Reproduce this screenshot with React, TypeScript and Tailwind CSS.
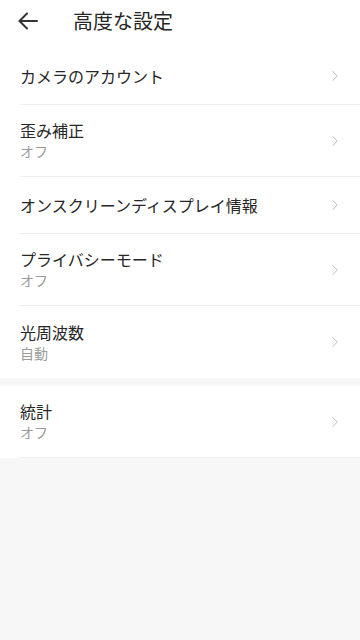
import { ChevronRight } from 'lucide-react';

const font = { fontFamily: '"Noto Sans CJK JP", "Noto Sans", sans-serif' };

type Item = { title: string; sub?: string };

const group1: Item[] = [
  { title: 'カメラのアカウント' },
  { title: '歪み補正', sub: 'オフ' },
  { title: 'オンスクリーンディスプレイ情報' },
  { title: 'プライバシーモード', sub: 'オフ' },
  { title: '光周波数', sub: '自動' },
];

const group2: Item[] = [{ title: '統計', sub: 'オフ' }];

const Row = ({ item, divider }: { item: Item; divider: boolean }) => (
  <div className="pl-5">
    <div
      className={`flex items-center pr-4 ${item.sub ? 'h-[72px]' : 'h-[57px]'} ${
        divider ? 'border-b border-[#ededed]' : ''
      }`}
    >
      <div className="flex-1 flex flex-col">
        <span className="text-[16px] leading-[22px] text-[#262626]">{item.title}</span>
        {item.sub && <span className="text-[14px] leading-[21px] text-[#9a9a9a]">{item.sub}</span>}
      </div>
      <ChevronRight size={18} strokeWidth={1.25} className="text-[#b8b8b8]" />
    </div>
  </div>
);

export default function App() {
  return (
    <div className="min-h-[640px] w-[360px] bg-[#f7f7f7]" style={font}>
      <div className="bg-white">
        <div className="h-12 flex items-start pt-[8px]">
          <div className="w-[73px] pl-[17px] pt-[3px]">
            <svg width="22" height="20" viewBox="0 0 22 20" fill="none" stroke="#333" strokeWidth="2" strokeLinecap="round">
              <path d="M20 10H3M10 2.5L2.5 10L10 17.5" />
            </svg>
          </div>
          <h1 className="text-[20px] leading-[26px] text-[#262626]">高度な設定</h1>
        </div>
        {group1.map((it, i) => (
          <Row key={i} item={it} divider={i < group1.length - 1} />
        ))}
      </div>
      <div className="h-2" />
      <div className="bg-white">
        {group2.map((it, i) => (
          <Row key={i} item={it} divider />
        ))}
      </div>
    </div>
  );
}
